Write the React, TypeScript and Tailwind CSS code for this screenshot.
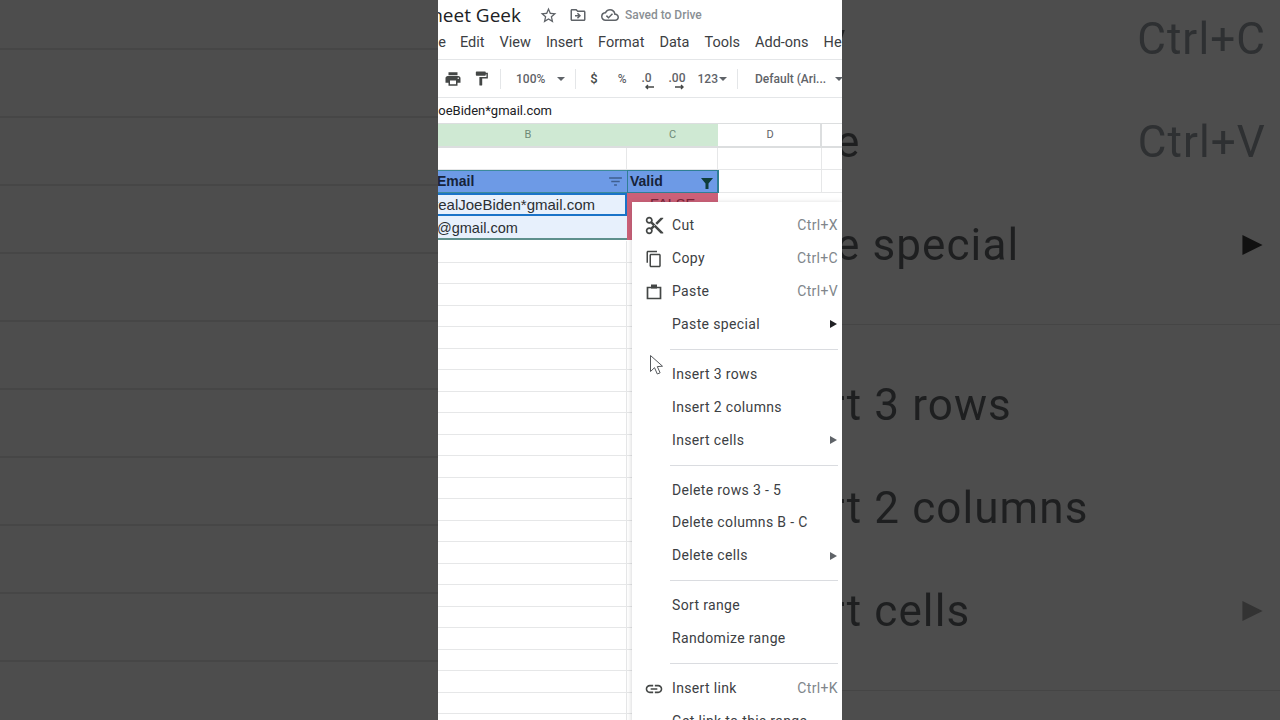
import {
  MdContentCut,
  MdFilterList,
  MdFormatPaint,
  MdLink,
  MdOutlineCloudDone,
  MdOutlineContentCopy,
  MdOutlineDriveFileMove,
  MdPrint,
  MdStarBorder,
} from 'react-icons/md';

type MenuRow = {
  label?: string;
  shortcut?: string;
  arrow?: boolean;
  icon?: React.ReactNode;
  sep?: boolean;
};

const PasteIcon = () => (
  <svg width="18" height="18" viewBox="0 0 18 18" fill="none">
    <path d="M2.5 4.5h13v11h-13z" stroke="currentColor" strokeWidth="1.7" />
    <path d="M6 1.5h6v4H6z" fill="currentColor" />
  </svg>
);

const menuRows: MenuRow[] = [
  { label: 'Cut', shortcut: 'Ctrl+X', icon: <MdContentCut size={21} /> },
  { label: 'Copy', shortcut: 'Ctrl+C', icon: <MdOutlineContentCopy size={18} /> },
  { label: 'Paste', shortcut: 'Ctrl+V', icon: <PasteIcon /> },
  { label: 'Paste special', arrow: true },
  { sep: true },
  { label: 'Insert 3 rows' },
  { label: 'Insert 2 columns' },
  { label: 'Insert cells', arrow: true },
  { sep: true },
  { label: 'Delete rows 3 - 5' },
  { label: 'Delete columns B - C' },
  { label: 'Delete cells', arrow: true },
  { sep: true },
  { label: 'Sort range' },
  { label: 'Randomize range' },
  { sep: true },
  { label: 'Insert link', shortcut: 'Ctrl+K', icon: <MdLink size={20} /> },
  { label: 'Get link to this range' },
];

const topMenu = [
  { label: 'Edit', className: 'ml-[14px]' },
  { label: 'View', className: 'ml-[15px]' },
  { label: 'Insert', className: 'ml-[15px]' },
  { label: 'Format', className: 'ml-[15px]' },
  { label: 'Data', className: 'ml-[15px]' },
  { label: 'Tools', className: 'ml-[15px]' },
  { label: 'Add-ons', className: 'ml-[15px]' },
  { label: 'Help', className: 'ml-[15px]' },
];

const zoomRows: MenuRow[] = menuRows.slice(1, 9);

const Caret = () => (
  <svg width="8" height="4" viewBox="0 0 8 4" className="shrink-0">
    <path d="M0 0h8L4 4z" fill="#5f6368" />
  </svg>
);

const ToolSep = () => <div className="h-[20px] w-px shrink-0 bg-[#e4e6e8]" />;

const GridRow = ({ className = '' }: { className?: string }) => (
  <div className={`flex shrink-0 border-b border-[#e6e7e8] ${className}`}>
    <div className="w-[189px] shrink-0 border-r border-[#e6e7e8]" />
    <div className="w-[91px] shrink-0 border-r border-[#e6e7e8]" />
    <div className="w-[104px] shrink-0 border-r border-[#e6e7e8]" />
    <div className="flex-1" />
  </div>
);

const SideLeft = () => (
  <div className="flex w-[438px] shrink-0 flex-col bg-[#4d4d4d] pt-[48px]">
    {Array.from({ length: 10 }).map((_, i) => (
      <div key={i} className="h-[68px] shrink-0 border-t-2 border-[#464646]" />
    ))}
  </div>
);

const SideRight = () => (
  <div className="flex w-[438px] shrink-0 flex-col overflow-hidden bg-[#4d4d4d] pt-[1px] font-['Roboto',sans-serif] text-[44px] tracking-[1.1px] text-[#1e1f20] -mt-[14px]">
    {zoomRows.map((row, i) =>
      row.sep ? (
        <div key={i} className="flex h-[56px] shrink-0 items-center">
          <div className="h-px w-full bg-[#454545]" />
        </div>
      ) : (
        <div key={i} className="flex h-[103.3px] shrink-0 items-center justify-between pr-[14px]">
          <span className="-ml-[99px] whitespace-nowrap blur-[0.7px]">{row.label}</span>
          {row.shortcut && <span className="whitespace-nowrap text-[#2e3032] blur-[0.7px]">{row.shortcut}</span>}
          {row.arrow && (
            <svg width="23" height="22" viewBox="0 0 24 24" className="mr-[2px] blur-[0.5px]">
              <path d="M1 1l22 11L1 23z" fill={row.label === 'Paste special' ? '#111' : '#333'} />
            </svg>
          )}
        </div>
      )
    )}
  </div>
);

const ContextMenu = () => (
  <div className="absolute left-[194px] top-[202px] w-[210px] bg-white pb-4 pr-[4px] pt-[7.6px] font-['Roboto',sans-serif] text-[14px] tracking-[0.35px] text-[#3c4043] shadow-[0_1px_5px_rgba(60,64,67,0.25)]">
    {menuRows.map((row, i) =>
      row.sep ? (
        <div key={i} className="flex h-[17.3px] items-center pl-[38px]">
          <div className="h-px w-full bg-[#dadce0]" />
        </div>
      ) : (
        <div key={i} className="flex h-[32.8px] items-center">
          <div className="flex w-[40px] shrink-0 items-center justify-center pl-[4px] text-[#444746]">{row.icon}</div>
          <span className="flex-1 whitespace-nowrap">{row.label}</span>
          {row.shortcut && <span className="text-[#80868b]">{row.shortcut}</span>}
          {row.arrow && (
            <svg width="7" height="8" viewBox="0 0 7 8" className="mr-[1px]">
              <path d="M0 0l7 4-7 4z" fill={row.label === 'Paste special' ? '#202124' : '#5f6368'} />
            </svg>
          )}
        </div>
      )
    )}
  </div>
);

const Sheet = () => (
  <div className="relative flex h-[720px] w-[404px] shrink-0 flex-col overflow-hidden bg-white font-['Roboto',sans-serif]">
    {/* title */}
    <div className="flex h-[30px] shrink-0 items-center text-[#5f6368]">
      <div className="flex w-[83px] shrink-0 justify-end">
        <span className="whitespace-nowrap font-['Open_Sans',sans-serif] text-[19px] text-[#202124]">Sheet Geek</span>
      </div>
      <MdStarBorder size={19} className="ml-[18px] shrink-0" />
      <MdOutlineDriveFileMove size={18} className="ml-[11px] shrink-0" />
      <MdOutlineCloudDone size={18} className="ml-[14px] shrink-0" />
      <span className="ml-[6px] whitespace-nowrap text-[12px] font-medium text-[#8a8f94]">Saved to Drive</span>
    </div>

    {/* menu bar */}
    <div className="flex h-[30px] shrink-0 items-center border-b border-[#e4e6e8] pb-[3px] text-[14.5px] text-[#3c4043]">
      <div className="flex w-[8px] shrink-0 justify-end">
        <span className="whitespace-nowrap">File</span>
      </div>
      {topMenu.map((item) => (
        <span key={item.label} className={`shrink-0 whitespace-nowrap ${item.className}`}>
          {item.label}
        </span>
      ))}
    </div>

    {/* toolbar */}
    <div className="flex h-[38px] shrink-0 items-center border-b border-[#e4e6e8] pl-[6px] text-[12px] font-medium text-[#5f6368]">
      <MdPrint size={18} className="shrink-0 text-[#444746]" />
      <MdFormatPaint size={17} className="ml-[11px] shrink-0 text-[#444746]" />
      <div className="ml-[10px]"><ToolSep /></div>
      <span className="ml-[15px] shrink-0">100%</span>
      <div className="ml-[12px]"><Caret /></div>
      <div className="ml-[10px]"><ToolSep /></div>
      <span className="ml-[14px] shrink-0 text-[13px] text-[#444746]">$</span>
      <span className="ml-[20px] shrink-0">%</span>
      <span className="ml-[13px] mt-[5px] flex shrink-0 flex-col items-center leading-[11px]">
        .0
        <svg width="10" height="6" viewBox="0 0 10 6" className="ml-[4px]"><path d="M10 3H2M4 1L2 3l2 2" stroke="#444746" strokeWidth="1.4" fill="none" /></svg>
      </span>
      <span className="ml-[15px] mt-[5px] flex shrink-0 flex-col items-center leading-[11px]">
        .00
        <svg width="10" height="6" viewBox="0 0 10 6" className="ml-[6px]"><path d="M0 3h8M6 1l2 2-2 2" stroke="#444746" strokeWidth="1.4" fill="none" /></svg>
      </span>
      <span className="ml-[12px] shrink-0">123</span>
      <div className="ml-[1px]"><Caret /></div>
      <div className="ml-[10px]"><ToolSep /></div>
      <span className="ml-[17px] shrink-0 whitespace-nowrap">Default (Ari...</span>
      <div className="ml-[9px]"><Caret /></div>
    </div>

    {/* formula bar */}
    <div className="flex h-[25px] shrink-0 items-center text-[13px] text-[#202124]">
      <div className="flex w-[114px] shrink-0 justify-end">
        <span className="whitespace-nowrap">@realJoeBiden*gmail.com</span>
      </div>
    </div>

    {/* column headers */}
    <div className="flex h-[25px] shrink-0 border-b-2 border-t border-[#dcdedf] text-[11px] text-[#6f8a76]">
      <div className="flex w-[189px] shrink-0 items-center justify-center bg-[#cfe9d3] pr-[9px]">B</div>
      <div className="flex w-[91px] shrink-0 items-center justify-center bg-[#cfe9d3]">C</div>
      <div className="flex w-[104px] shrink-0 items-center justify-center border-r-2 border-[#dcdedf] pl-[2px] text-[#5f6368]">D</div>
      <div className="flex-1" />
    </div>

    {/* cells */}
    <GridRow className="h-[22px]" />
    <div className="flex h-[23px] shrink-0 font-['Liberation_Sans',sans-serif] text-[14px]">
      <div className="flex w-[189px] shrink-0 items-center justify-between border-y border-[#3c8a9c] bg-[#6d9ae6] pr-[3px] font-bold text-[#16233a]">
        <span className="-ml-[1px]">Email</span>
        <MdFilterList size={17} className="text-[#3f5f8f]" />
      </div>
      <div className="flex w-[92px] shrink-0 items-center justify-between border border-r-2 border-[#2f7f95] bg-[#6d9ae6] pl-[2px] pr-[3px] font-bold text-[#16233a]">
        <span>Valid</span>
        <svg width="14" height="14" viewBox="0 0 14 14" className="mt-[2px]"><path d="M1 2h12L8.5 7.5V13h-3V7.5z" fill="#0f3d3a" /></svg>
      </div>
      <div className="flex flex-1 border-b border-[#e6e7e8]">
        <div className="w-[103px] shrink-0 border-r border-[#e6e7e8]" />
      </div>
    </div>
    <div className="flex h-[23px] shrink-0 font-['Liberation_Sans',sans-serif] text-[14.5px] text-[#2b2f33]">
      <div className="flex w-[189px] shrink-0 items-center border-2 border-l-0 border-[#1a73c8] bg-[#e7f0fc] pt-[1px]">
        <div className="flex w-[157px] shrink-0 justify-end">
          <span className="whitespace-nowrap text-[15px]">@realJoeBiden*gmail.com</span>
        </div>
      </div>
      <div className="flex w-[91px] shrink-0 items-center justify-center bg-[#cc6078] text-[#7a2236]">FALSE</div>
    </div>
    <div className="flex h-[24px] shrink-0 font-['Liberation_Sans',sans-serif] text-[14.5px] text-[#2b2f33]">
      <div className="flex w-[189px] shrink-0 items-center border-b-2 border-[#5e8f8c] bg-[#e7f0fc] pt-[4px]">
        <span className="-ml-[1px] whitespace-nowrap">@gmail.com</span>
      </div>
      <div className="w-[91px] shrink-0 bg-[#cc6078]" />
    </div>
    <div className="h-[1px] shrink-0" />
    {Array.from({ length: 23 }).map((_, i) => (
      <GridRow key={i} className="h-[21.5px]" />
    ))}

    <ContextMenu />

    {/* mouse pointer */}
    <svg width="15" height="22" viewBox="0 0 15 22" className="absolute left-[211px] top-[354px]">
      <path d="M1.5 1.5v16l4-3.8 2.8 6.3 2.8-1.2-2.8-6.2 5.2-.4z" fill="#fff" stroke="#55585c" strokeWidth="1" />
    </svg>
  </div>
);

export default function App() {
  return (
    <div className="flex h-[720px] w-[1280px] overflow-hidden bg-[#4d4d4d]">
      <SideLeft />
      <Sheet />
      <SideRight />
    </div>
  );
}
